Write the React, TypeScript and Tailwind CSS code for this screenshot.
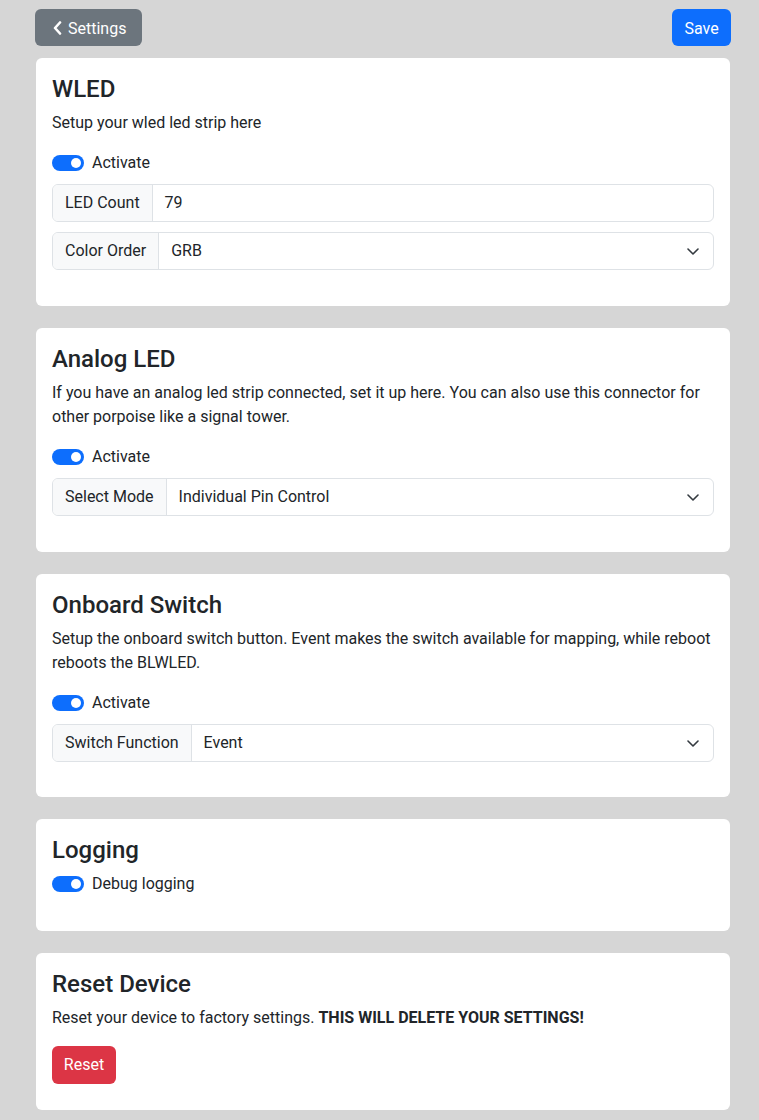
import React from "react";

function Switch({ label }: { label: string }) {
  return (
    <div className="flex h-6 items-center">
      <div className="flex h-4 w-8 items-center justify-end rounded-full bg-[#0d6efd] pr-[3px]">
        <div className="h-[10px] w-[10px] rounded-full bg-white" />
      </div>
      <span className="ml-2 text-[16px] leading-6">{label}</span>
    </div>
  );
}

function Chevron() {
  return (
    <svg width="12" height="7" viewBox="0 0 12 7" className="mr-[2px] shrink-0">
      <path d="M1 1l5 5 5-5" fill="none" stroke="#343a40" strokeWidth="1.6" strokeLinecap="round" strokeLinejoin="round" />
    </svg>
  );
}

function InputGroup({ label, value, select }: { label: string; value: string; select?: boolean }) {
  return (
    <div className="flex h-[38px] w-full rounded-[6px] border border-[#dee2e6] text-[16px]">
      <div className="flex items-center whitespace-nowrap rounded-l-[5px] border-r border-[#dee2e6] bg-[#f8f9fa] px-3">
        {label}
      </div>
      <div className="flex flex-1 items-center justify-between pl-3 pr-3">
        <span>{value}</span>
        {select && <Chevron />}
      </div>
    </div>
  );
}

function Card({ children, className = "" }: { children: React.ReactNode; className?: string }) {
  return <div className={`rounded-[6px] bg-white px-4 pt-4 ${className}`}>{children}</div>;
}

function Title({ children }: { children: React.ReactNode }) {
  return <h4 className="mb-2 pt-[1px] text-[24px] font-medium leading-[28px]">{children}</h4>;
}

export default function App() {
  return (
    <div
      className="min-h-[1120px] bg-[#d6d6d6] text-[#212529]"
      style={{ fontFamily: "Roboto, 'Liberation Sans', sans-serif" }}
    >
      <div className="ml-[35px] w-[696px] pt-[9px]">
        <div className="flex items-center justify-between">
          <button className="flex h-[37px] w-[107px] items-center rounded-[6px] bg-[#6c757d] pl-[18px] pt-[2px] text-[16px] text-white">
            <svg width="9" height="14" viewBox="0 0 9 14" className="mr-[6px] -mt-[1px]">
              <path d="M7 1.5 2 7l5 5.5" fill="none" stroke="white" strokeWidth="2.6" strokeLinecap="round" strokeLinejoin="round" />
            </svg>
            Settings
          </button>
          <button className="flex h-[37px] w-[59px] items-center justify-center rounded-[6px] bg-[#0d6efd] pt-[2px] text-[16px] text-white">
            Save
          </button>
        </div>

        <div className="mx-[1px] mt-[12px] flex flex-col gap-[22px]">
          <Card className="pb-[36px]">
            <Title>WLED</Title>
            <p className="mb-4 leading-6">Setup your wled led strip here</p>
            <Switch label="Activate" />
            <div className="mt-[9px] flex flex-col gap-[10px]">
              <InputGroup label="LED Count" value="79" />
              <InputGroup label="Color Order" value="GRB" select />
            </div>
          </Card>

          <Card className="pb-[36px]">
            <Title>Analog LED</Title>
            <p className="mb-4 leading-6">
              If you have an analog led strip connected, set it up here. You can also use this connector for other
              porpoise like a signal tower.
            </p>
            <Switch label="Activate" />
            <div className="mt-[9px]">
              <InputGroup label="Select Mode" value="Individual Pin Control" select />
            </div>
          </Card>

          <Card className="pb-[35px]">
            <Title>Onboard Switch</Title>
            <p className="mb-4 leading-6">
              Setup the onboard switch button. Event makes the switch available for mapping, while reboot reboots the
              BLWLED.
            </p>
            <Switch label="Activate" />
            <div className="mt-[9px]">
              <InputGroup label="Switch Function" value="Event" select />
            </div>
          </Card>

          <Card className="pb-[35px]">
            <Title>Logging</Title>
            <Switch label="Debug logging" />
          </Card>

          <Card className="pb-[26px]">
            <Title>Reset Device</Title>
            <p className="mb-4 leading-6">
              Reset your device to factory settings. <b className="font-bold">THIS WILL DELETE YOUR SETTINGS!</b>
            </p>
            <button className="flex h-[38px] w-[64px] items-center justify-center rounded-[6px] bg-[#dc3545] text-[16px] text-white">
              Reset
            </button>
          </Card>
        </div>
      </div>
    </div>
  );
}
